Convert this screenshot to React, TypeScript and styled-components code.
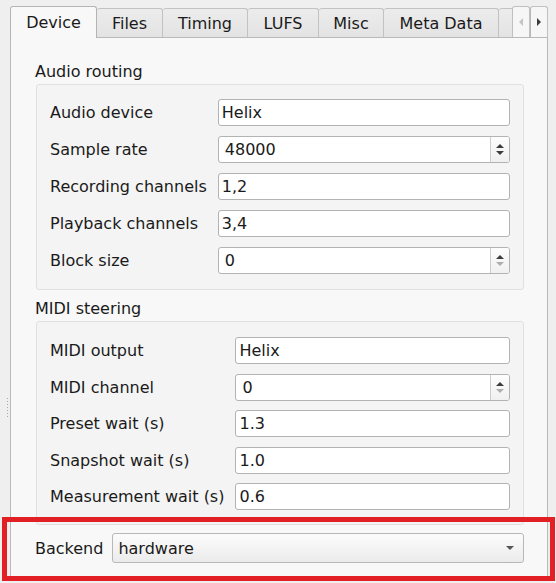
import React from "react";
import styled, { createGlobalStyle } from "styled-components";

const Global = createGlobalStyle`
  html, body { margin: 0; padding: 0; background: #efefef; }
  body {
    font-family: "DejaVu Sans", Verdana, sans-serif;
    font-size: 16px;
    color: #1a1a1a;
  }
  #root { width: 556px; height: 583px; position: relative; overflow: hidden; }
`;

const Page = styled.div`
  position: relative;
  display: flex;
  width: 556px;
  height: 583px;
  box-sizing: border-box;
  padding-top: 6px;
`;

const Handle = styled.div`
  flex: none;
  width: 10px;
  box-sizing: border-box;
  padding-top: 392px;
  display: flex;
  justify-content: flex-end;
`;

const Grip = styled.div`
  width: 1px;
  height: 21px;
  margin-right: 2px;
  background-image: repeating-linear-gradient(
    to bottom,
    #a9a9a9 0 1px,
    transparent 1px 3px
  );
`;

const TabWidget = styled.div`
  flex: none;
  width: 538px;
  display: flex;
  flex-direction: column;
`;

const TabBar = styled.div`
  display: flex;
  height: 31px;
  align-items: flex-end;
`;

const TabStrip = styled.div`
  width: 502px;
  height: 32px;
  overflow: hidden;
  display: flex;
  align-items: flex-end;
  position: relative;
  z-index: 2;
  margin-bottom: -1px;
`;

const Tab = styled.div<{ $active?: boolean; $w: number; $first?: boolean }>`
  flex: none;
  box-sizing: border-box;
  width: ${(p) => p.$w}px;
  height: ${(p) => (p.$active ? 32 : 29)}px;
  margin-bottom: ${(p) => (p.$active ? 0 : 1)}px;
  display: flex;
  align-items: center;
  justify-content: center;
  padding-bottom: ${(p) => (p.$active ? 1 : 0)}px;
  line-height: 19px;
  white-space: nowrap;
  border: 1px solid ${(p) => (p.$active ? "#b4b4b4" : "#c2c2c2")};
  border-bottom: none;
  border-left: ${(p) => (p.$first ? "" : "none")};
  border-radius: 3px 3px 0 0;
  background: ${(p) =>
    p.$active ? "#f8f8f8" : "linear-gradient(#ececec, #e3e3e3)"};
  color: #1a1a1a;
`;

const ScrollButtons = styled.div`
  display: flex;
  height: 31px;
`;

const ScrollButton = styled.div`
  box-sizing: border-box;
  width: 18px;
  height: 31px;
  display: flex;
  align-items: center;
  justify-content: center;
  border: 1px solid #c0c0c0;
  border-bottom: none;
  border-radius: 3px 3px 0 0;
  background: #f6f6f6;
  & + & { border-left: 1px solid #b8b8b8; }
`;

const Pane = styled.div`
  box-sizing: border-box;
  height: 540px;
  border: 1px solid #b9b9b9;
  background: #f8f8f8;
  padding: 24px 23px 0 25px;
  display: flex;
  flex-direction: column;
`;

const GroupTitle = styled.div<{ $top: number }>`
  line-height: 19px;
  height: 19px;
  margin-left: -1px;
  margin-top: ${(p) => p.$top}px;
  margin-bottom: 3px;
  white-space: nowrap;
`;

const GroupBox = styled.div<{ $pad: string; $gap: number }>`
  box-sizing: border-box;
  border: 1px solid #e0e0e0;
  border-radius: 3px;
  background: #f4f4f4;
  padding: ${(p) => p.$pad};
  display: grid;
  grid-template-columns: max-content 1fr;
  column-gap: 11px;
  row-gap: ${(p) => p.$gap}px;
  align-items: center;
`;

const Label = styled.div`
  line-height: 19px;
  white-space: nowrap;
`;

const Field = styled.div<{ $pad?: number }>`
  box-sizing: border-box;
  height: 27px;
  border: 1px solid #b3b3b3;
  border-radius: 3px;
  background: #ffffff;
  display: flex;
  align-items: center;
  padding-left: ${(p) => p.$pad ?? 3}px;
  line-height: 19px;
  overflow: hidden;
`;

const FieldText = styled.div`
  flex: 1;
  white-space: nowrap;
`;

const SpinButtons = styled.div`
  flex: none;
  align-self: stretch;
  width: 18px;
  border-left: 1px solid #cdcdcd;
  background: linear-gradient(#fdfdfd, #f0f0f0);
  display: flex;
  flex-direction: column;
  align-items: center;
  justify-content: center;
  gap: 3px;
`;

const BackendRow = styled.div`
  display: flex;
  align-items: center;
  gap: 9px;
  margin-left: -1px;
  margin-top: 8px;
`;

const Combo = styled.div`
  flex: 1;
  box-sizing: border-box;
  height: 30px;
  border: 1px solid #b8b8b8;
  border-radius: 3px;
  background: linear-gradient(#fcfcfc, #ebebeb);
  display: flex;
  align-items: center;
  padding: 0 9px 0 5px;
  line-height: 19px;
`;

const Highlight = styled.div`
  position: absolute;
  left: 2px;
  top: 517px;
  width: 553px;
  height: 64px;
  box-sizing: border-box;
  border: 5px solid #e31f26;
  pointer-events: none;
`;

const Tri = ({ dir, color }: { dir: "up" | "down" | "left" | "right"; color: string }) => {
  const pts: Record<string, string> = {
    up: "0,4 4,0 8,4",
    down: "0,0 8,0 4,4",
    left: "4,0 4,8 0,4",
    right: "0,0 4,4 0,8",
  };
  const vertical = dir === "up" || dir === "down";
  return (
    <svg width={vertical ? 8 : 4} height={vertical ? 4 : 8} viewBox={vertical ? "0 0 8 4" : "0 0 4 8"}>
      <polygon points={pts[dir]} fill={color} />
    </svg>
  );
};

const Spin = ({ value, atMin }: { value: string; atMin?: boolean }) => (
  <Field $pad={6}>
    <FieldText>{value}</FieldText>
    <SpinButtons>
      <Tri dir="up" color="#3c3c3c" />
      <Tri dir="down" color={atMin ? "#aeaeae" : "#3c3c3c"} />
    </SpinButtons>
  </Field>
);

const Text = ({ value }: { value: string }) => (
  <Field>
    <FieldText>{value}</FieldText>
  </Field>
);

const tabs: { name: string; w: number }[] = [
  { name: "Device", w: 87 },
  { name: "Files", w: 66 },
  { name: "Timing", w: 85 },
  { name: "LUFS", w: 71 },
  { name: "Misc", w: 65 },
  { name: "Meta Data", w: 115 },
  { name: "", w: 70 },
];

export default function App() {
  return (
    <>
      <Global />
      <Page>
        <Handle>
          <Grip />
        </Handle>
        <TabWidget>
          <TabBar>
            <TabStrip>
              {tabs.map((t, i) => (
                <Tab key={i} $w={t.w} $active={i === 0} $first={i === 0}>
                  {t.name}
                </Tab>
              ))}
            </TabStrip>
            <ScrollButtons>
              <ScrollButton>
                <Tri dir="left" color="#c4c4c4" />
              </ScrollButton>
              <ScrollButton>
                <Tri dir="right" color="#3a3a3a" />
              </ScrollButton>
            </ScrollButtons>
          </TabBar>
          <Pane>
            <GroupTitle $top={0}>Audio routing</GroupTitle>
            <GroupBox $pad="14px 13px 15px 13px" $gap={10}>
              <Label>Audio device</Label>
              <Text value="Helix" />
              <Label>Sample rate</Label>
              <Spin value="48000" />
              <Label>Recording channels</Label>
              <Text value="1,2" />
              <Label>Playback channels</Label>
              <Text value="3,4" />
              <Label>Block size</Label>
              <Spin value="0" atMin />
            </GroupBox>
            <GroupTitle $top={9}>MIDI steering</GroupTitle>
            <GroupBox $pad="15px 13px 14px 13px" $gap={9.5}>
              <Label>MIDI output</Label>
              <Text value="Helix" />
              <Label>MIDI channel</Label>
              <Spin value="0" atMin />
              <Label>Preset wait (s)</Label>
              <Text value="1.3" />
              <Label>Snapshot wait (s)</Label>
              <Text value="1.0" />
              <Label>Measurement wait (s)</Label>
              <Text value="0.6" />
            </GroupBox>
            <BackendRow>
              <Label>Backend</Label>
              <Combo>
                <FieldText>hardware</FieldText>
                <Tri dir="down" color="#555555" />
              </Combo>
            </BackendRow>
          </Pane>
        </TabWidget>
        <Highlight />
      </Page>
    </>
  );
}
